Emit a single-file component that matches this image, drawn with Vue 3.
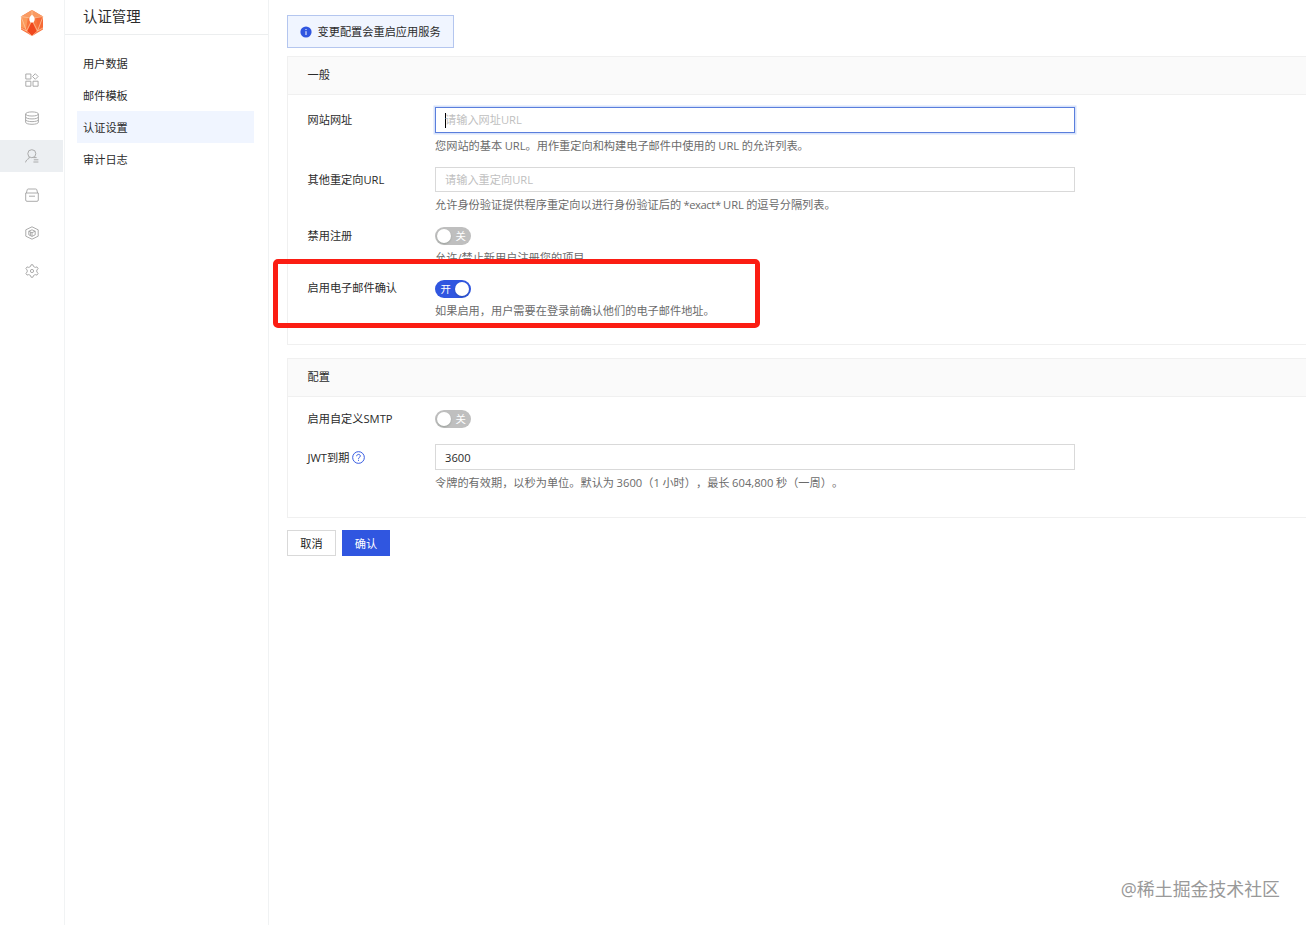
<template>
  <div class="layout">
    <nav class="rail">
      <svg class="logo" viewBox="0 0 24 28">
        <polygon points="12,1 23,7.5 23,20.5 12,27 1,20.5 1,7.5" fill="#f9743c" />
        <polygon points="12,1 23,7.5 12,9 1,7.5" fill="#f99a62" />
        <polygon points="1,7.5 8,8 6,20 1,18" fill="#fb9a5c" />
        <polygon points="23,7.5 16,8 18,20 23,18" fill="#f66a35" />
        <polygon points="12,12 17,23 12,27 7,23" fill="#f0481e" />
        <path
          d="M1 7.5L6.5 22L12 11L17.5 22L23 7.5M1 7.5L10 9M23 7.5L14 9M12 1V7M1 19L6.5 22L12 27L17.5 22L23 19"
          fill="none"
          stroke="#fccba6"
          stroke-width=".7"
        />
        <path d="M12 5.8C15.4 8.6 15.2 11.2 13.4 13.4H10.6C8.8 11.2 8.6 8.6 12 5.8Z" fill="#fff" />
      </svg>
      <a v-for="item in rail" :key="item.name" class="rail-item" :class="{ active: item.active }">
        <svg viewBox="0 0 14 14">
          <path v-for="d in item.paths" :key="d" :d="d" />
        </svg>
      </a>
    </nav>

    <aside class="sidebar">
      <h1 class="sidebar-title">认证管理</h1>
      <ul class="menu">
        <li v-for="name in menu" :key="name" :class="{ active: name === current }">{{ name }}</li>
      </ul>
    </aside>

    <main class="content">
      <div class="alert">
        <svg viewBox="0 0 12 12">
          <circle cx="6" cy="6" r="5.6" fill="#3056e0" />
          <path d="M6 5.2V9M6 3V4.1" stroke="#fff" stroke-width="1" />
        </svg>
        <span>变更配置会重启应用服务</span>
      </div>

      <section class="panel general">
        <h2>一般</h2>
        <div class="panel-body">
          <div class="row">
            <label>网站网址</label>
            <div class="field">
              <div class="input focused"><i class="caret"></i><span class="placeholder">请输入网址URL</span></div>
              <p class="hint hint-url">您网站的基本 URL。用作重定向和构建电子邮件中使用的 URL 的允许列表。</p>
            </div>
          </div>
          <div class="row">
            <label>其他重定向URL</label>
            <div class="field">
              <div class="input redirect"><span class="placeholder">请输入重定向URL</span></div>
              <p class="hint hint-redirect">允许身份验证提供程序重定向以进行身份验证后的 <span class="exact">*exact*</span> URL 的逗号分隔列表。</p>
            </div>
          </div>
          <div class="row row-switch">
            <label>禁用注册</label>
            <div class="field">
              <button class="switch"><i></i><span>关</span></button>
              <p class="hint">允许/禁止新用户注册您的项目</p>
            </div>
          </div>
          <div class="row row-switch row-confirm">
            <label>启用电子邮件确认</label>
            <div class="field">
              <button class="switch on"><span>开</span><i></i></button>
              <p class="hint">如果启用，用户需要在登录前确认他们的电子邮件地址。</p>
            </div>
          </div>
        </div>
      </section>

      <section class="panel config">
        <h2>配置</h2>
        <div class="panel-body">
          <div class="row row-smtp">
            <label>启用自定义SMTP</label>
            <div class="field">
              <button class="switch"><i></i><span>关</span></button>
            </div>
          </div>
          <div class="row">
            <label class="jwt">
              <span>JWT到期</span>
              <svg class="help" viewBox="0 0 12 12">
                <circle cx="6" cy="6" r="5.4" />
                <path d="M4.3 4.8C4.3 2.6 7.7 2.6 7.7 4.7C7.7 5.9 6 5.8 6 7.2M6 8.1V9.1" />
              </svg>
            </label>
            <div class="field">
              <div class="input number">3600</div>
              <p class="hint hint-jwt">令牌的有效期，以秒为单位。默认为 3600（1 小时），最长 604,800 秒（一周）。</p>
            </div>
          </div>
        </div>
      </section>

      <div class="actions">
        <button class="btn">取消</button>
        <button class="btn primary">确认</button>
      </div>
    </main>

    <div class="highlight"></div>
    <div class="watermark">@稀土掘金技术社区</div>
  </div>
</template>

<script setup>
import { ref } from 'vue'

const menu = ['用户数据', '邮件模板', '认证设置', '审计日志']
const current = ref('认证设置')

const rail = [
  {
    name: 'apps',
    paths: ['M.8 1H5.9V6H.8Z', 'M10.3 .7L13.1 3.5L10.3 6.3L7.5 3.5Z', 'M.8 8.2H5.9V13.2H.8Z', 'M8 8.2H13.1V13.2H8Z']
  },
  {
    name: 'database',
    paths: [
      'M.6 3C.6 .2 13.4 .2 13.4 3C13.4 5.7 .6 5.7 .6 3Z',
      'M.6 3V11.2C.6 14 13.4 14 13.4 11.2V3',
      'M.6 5.9C.6 8.6 13.4 8.6 13.4 5.9',
      'M.6 8.6C.6 11.3 13.4 11.3 13.4 8.6'
    ]
  },
  {
    name: 'auth',
    active: true,
    paths: [
      'M10.8 4.7A4 4 0 1 1 2.8 4.7A4 4 0 1 1 10.8 4.7Z',
      'M4.4 8L3.8 9.6C2.2 10.2 1 11.5 .5 13.4',
      'M8.4 8.6H11.6M8.8 10.8H13.4M8.4 13H13.4'
    ]
  },
  {
    name: 'storage',
    paths: ['M.7 5H13.3V12Q13.3 13.3 12 13.3H2Q.7 13.3 .7 12Z', 'M1.4 5L2.2 1.8Q2.4 1 3.2 1H10.8Q11.6 1 11.8 1.8L12.6 5', 'M4 8.2H10']
  },
  {
    name: 'function',
    paths: [
      'M7 .8L13.2 3.8V10.2L7 13.2L.8 10.2V3.8Z',
      'M7 3.8L10.2 5.2V8.8L7 10.4L3.8 8.8V5.2Z',
      'M3.8 5.2L7 6.7L10.2 5.2M7 6.7V10.4M5.4 6V9.6'
    ]
  },
  {
    name: 'settings',
    paths: [
      'M6 .8H8L8.5 2.5L10.2 3.4L12 2.9L13.1 4.7L11.8 6V8L13.1 9.3L12 11.1L10.2 10.6L8.5 11.5L8 13.2H6L5.5 11.5L3.8 10.6L2 11.1L.9 9.3L2.2 8V6L.9 4.7L2 2.9L3.8 3.4L5.5 2.5Z',
      'M8.6 7A1.6 1.6 0 1 1 5.4 7A1.6 1.6 0 1 1 8.6 7Z'
    ]
  }
]
</script>

<style>
body {
  background: #fff;
  overflow: hidden;
}
</style>

<style scoped>
.layout {
  position: relative;
  display: flex;
  width: 1306px;
  height: 925px;
  overflow: hidden;
  color: #2b2b2b;
  font: 11.2px/18px 'Open Sans', 'Noto Sans CJK SC', sans-serif;
}

h1,
h2,
p,
ul {
  margin: 0;
  padding: 0;
  font-weight: normal;
  list-style: none;
}

button {
  font: inherit;
  padding: 0;
  border: 0;
}

.rail {
  box-sizing: border-box;
  width: 65px;
  flex: none;
  border-right: 1px solid #f1f3f4;
}

.logo {
  display: block;
  width: 24px;
  height: 28px;
  margin: 9px 0 26px 20px;
}

.rail-item {
  display: flex;
  align-items: center;
  justify-content: center;
  width: 63px;
  height: 32px;
  margin-bottom: 6.4px;
}

.rail-item.active {
  background: #eceff2;
}

.rail-item svg {
  width: 14px;
  height: 14px;
  margin-top: 1px;
  fill: none;
  stroke: #a3a3a3;
  stroke-width: 0.9;
}

.sidebar {
  box-sizing: border-box;
  width: 204px;
  flex: none;
  border-right: 1px solid #f0f2f3;
}

.sidebar-title {
  height: 34px;
  padding-left: 18px;
  border-bottom: 1px solid #eceeef;
  font-size: 14.4px;
  line-height: 33px;
}

.menu {
  padding: 12px 14px 0 12px;
}

.menu li {
  height: 32px;
  padding-left: 6px;
  line-height: 34px;
}

.menu li.active {
  background: #f0f5ff;
}

.content {
  flex: 1;
  min-width: 0;
  padding: 15px 0 0 18px;
}

.alert {
  box-sizing: border-box;
  display: flex;
  align-items: center;
  gap: 6px;
  width: 167px;
  height: 33px;
  padding-left: 11.5px;
  background: #f0f5ff;
  border: 1px solid #b4c6ef;
}

.alert svg {
  width: 12px;
  height: 12px;
}

.panel {
  box-sizing: border-box;
  border: 1px solid #f0f0f0;
  border-right: 0;
}

.general {
  height: 289px;
  margin-top: 8px;
}

.config {
  height: 160px;
  margin-top: 13px;
}

.panel h2 {
  height: 37px;
  padding-left: 19.5px;
  background: #fafafa;
  border-bottom: 1px solid #f0f0f0;
  font-size: 11.2px;
  line-height: 35px;
}

.panel-body {
  padding: 12px 0 0 19.5px;
}

.row {
  display: flex;
  height: 60px;
}

.row label {
  display: flex;
  align-items: center;
  width: 127.5px;
  height: 25px;
  flex: none;
}

.row-switch {
  height: 53px;
}

.row-smtp {
  height: 35px;
}

.row-switch label {
  height: 18px;
}

.row-confirm label {
  height: 16px;
}

.row-smtp label {
  height: 20px;
}

.row-smtp .switch {
  margin-top: 1px;
}

.row label.jwt {
  height: 27px;
}

.input {
  box-sizing: border-box;
  display: flex;
  align-items: center;
  width: 640px;
  height: 26px;
  padding-left: 9px;
  background: #fff;
  border: 1px solid #d9d9d9;
}

.input.redirect {
  height: 25px;
}

.input.number {
  padding-top: 2px;
}

.input.focused {
  border-color: #5a7edc;
  box-shadow: 0 0 0 1.5px #d6e2fb;
}

.caret {
  width: 1px;
  height: 15px;
  margin-right: -1px;
  background: #000;
}

.placeholder {
  color: #bfbfbf;
}

.hint {
  margin-top: 4px;
  color: #6b6b6b;
  white-space: nowrap;
}

.hint-url {
  word-spacing: -0.4px;
}

.hint-redirect {
  word-spacing: -0.6px;
}

.exact {
  letter-spacing: -0.4px;
}

/* keep full-width punctuation at its full advance */
.hint-jwt {
  text-spacing-trim: space-all;
  word-spacing: -0.3px;
}

.switch {
  display: flex;
  align-items: center;
  width: 36px;
  height: 18px;
  padding: 0 2px;
  box-sizing: border-box;
  border-radius: 9px;
  background: #bfbfbf;
  color: #fff;
  font-size: 10.4px;
  line-height: 18px;
}

.switch i {
  width: 14.4px;
  height: 14.4px;
  border-radius: 50%;
  background: #fff;
  box-shadow: 0 1px 2px rgba(0, 35, 11, 0.2);
}

.switch span {
  margin-left: 4px;
}

.switch.on {
  justify-content: space-between;
  background: #3056e0;
}

.switch.on span {
  margin-left: 3.5px;
}

.help {
  width: 13px;
  height: 13px;
  margin-left: 3px;
  fill: none;
  stroke: #3056e0;
  stroke-width: 0.9;
}

.actions {
  display: flex;
  gap: 6px;
  margin-top: 12px;
}

.btn {
  box-sizing: border-box;
  width: 49px;
  height: 26px;
  padding-top: 2px;
  background: #fff;
  border: 1px solid #d9d9d9;
  color: #222;
}

.btn.primary {
  width: 48px;
  background: #3056e0;
  border-color: #3056e0;
  color: #fff;
}

/* marker box drawn over the form */
.highlight {
  position: absolute;
  left: 273px;
  top: 259px;
  box-sizing: border-box;
  width: 487px;
  height: 69px;
  border: 5px solid #fb1d13;
  border-radius: 5px;
}

.watermark {
  position: absolute;
  right: 26px;
  bottom: 22px;
  color: #999;
  font-size: 17.9px;
  line-height: 28px;
}
</style>
